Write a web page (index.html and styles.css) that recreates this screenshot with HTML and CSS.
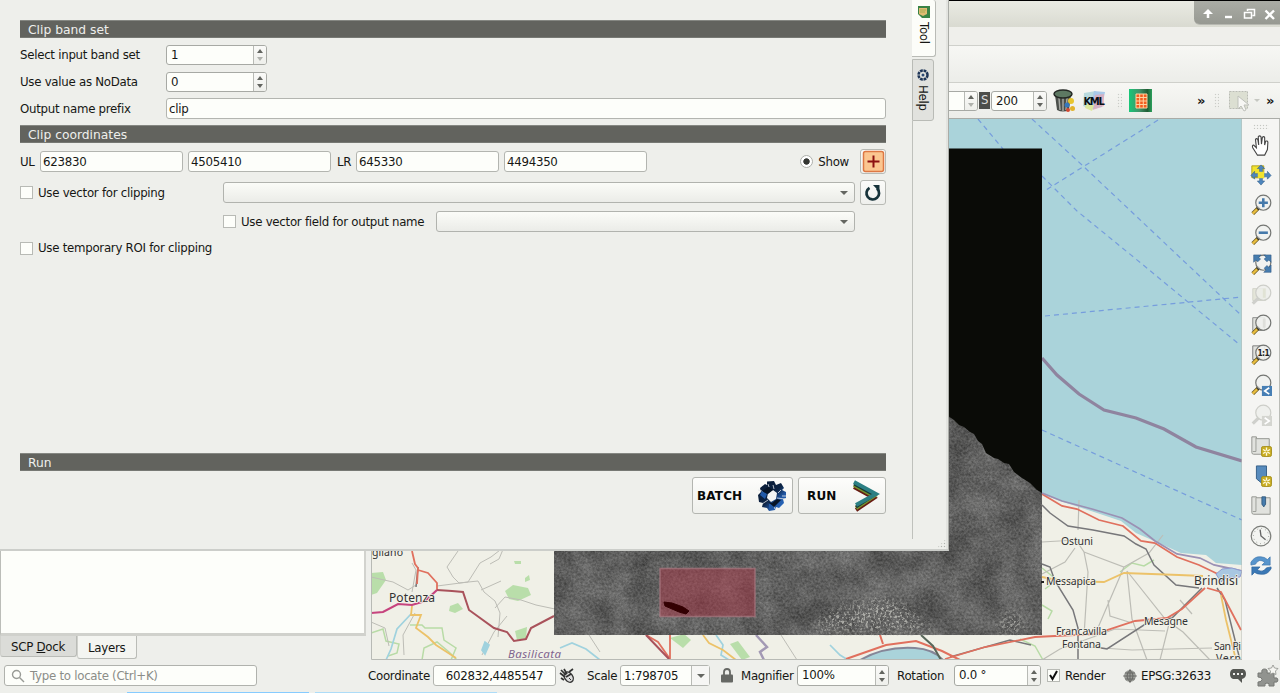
FILE: index.html
```html
<!DOCTYPE html>
<html lang="en">
<head>
<meta charset="utf-8">
<title>Clip band set</title>
<link rel="stylesheet" href="styles.css">
</head>
<body>
<svg class="defs" width="0" height="0">
  <symbol id="lens" viewBox="0 0 24 24">
    <path d="M3 21.500l6-6" stroke="#6b5a20" stroke-width="4.200"/>
    <path d="M3 21.500l5-5" stroke="#e8bd3f" stroke-width="2.600"/>
    <path d="M8 16.500l2.500-2.500" stroke="#222" stroke-width="3.200"/>
    <circle cx="14.500" cy="9.500" r="8.200" fill="#f1f2f0" fill-opacity=".9" stroke="#747673" stroke-width="1.300"/>
  </symbol>
  <symbol id="lens-off" viewBox="0 0 24 24">
    <path d="M3 21.500l7-7" stroke="#cfd0cc" stroke-width="3.500"/>
    <circle cx="14.500" cy="9.500" r="8.200" fill="#eeefeb" fill-opacity=".8" stroke="#cdcec9" stroke-width="1.300"/>
  </symbol>
  <symbol id="star" viewBox="0 0 12 12">
    <rect x=".5" y=".5" width="11" height="11" rx="2" fill="#c9ad22" stroke="#a48e1c"/>
    <path d="M6 1.500v9M2.200 3.800l7.600 4.400M2.200 8.200l7.600-4.400" stroke="#fffbe0" stroke-width="1.500"/>
    <circle cx="6" cy="6" r="1.200" fill="#c9ad22"/>
  </symbol>
</svg>

<div class="main-window">
  <header class="titlebar">
    <div class="window-buttons">
      <svg width="86" height="24" viewBox="0 0 86 24" fill="none" stroke="#fff">
        <path d="M14 17v-6" stroke-width="2.500"/><path d="M9 13l5-5 5 5z" fill="#fff" stroke="none"/>
        <path d="M31 16h7" stroke-width="2.400"/>
        <path d="M53.500 10v-1.500h7v6h-2M50.500 11.500h7v5.500h-7z" stroke-width="1.500"/>
        <path d="M71.500 9.500l8.500 8.500M80 9.500l-8.500 8.500" stroke-width="2.400"/>
      </svg>
    </div>
  </header>
  <div class="menubar"></div>
  <div class="toolrow"></div>
  <div class="toolrow tools">
    <div class="spin zoomspin"><span></span><i class="arrows dim"></i></div>
    <b class="s-badge">S</b>
    <div class="spin sizespin"><span>200</span><i class="arrows"></i></div>
    <svg class="trash" width="22" height="24" viewBox="0 0 22 24">
      <path d="M2 6l2 15q6 3 12 0l2-15z" fill="#4b4f4b"/><path d="M6 9l1 12M10 9v13M14 9l-1 12" stroke="#a5a8a2" stroke-width="1.500"/>
      <ellipse cx="10" cy="5" rx="9" ry="4" fill="#5d7862" stroke="#242824" stroke-width="1.500"/>
      <circle cx="18" cy="12" r="3" fill="#e7c52e"/><circle cx="14" cy="16" r="2.500" fill="#3677bc"/><circle cx="15" cy="21" r="2" fill="#d44832"/><circle cx="19.500" cy="19.500" r="2.500" fill="#e2b32b"/>
    </svg>
    <svg class="kml" width="24" height="22" viewBox="0 0 24 22">
      <path d="M2 3l12-2-6 18-7-3z" fill="#b9d9dd"/><path d="M12 1l11 1-3 15-12 3z" fill="#a9c9e9"/><path d="M13 5l9-1v12l-11 4z" fill="#e7a7b4" opacity=".7"/><path d="M4 14l8 1-2 6-7-3z" fill="#dce89c"/>
      <text x="12" y="15" text-anchor="middle" textLength="21" class="kml-text">KML</text>
    </svg>
    <i class="grip g1"></i>
    <svg class="grid-icon" width="23" height="23" viewBox="0 0 23 23">
      <defs><linearGradient id="gg"><stop offset="0" stop-color="#16c878"/><stop offset=".45" stop-color="#42936a"/><stop offset=".8" stop-color="#205c34"/><stop offset="1" stop-color="#2ba15c"/></linearGradient></defs>
      <rect width="23" height="23" fill="url(#gg)"/><rect x="7" y="5" width="11" height="14" fill="#f45d1f"/>
      <path d="M7 5h11v14H7zM10.700 5v14M14.300 5v14M7 8.500h11M7 12h11M7 15.500h11" stroke="#ffd3a0" fill="none"/>
    </svg>
    <b class="more m1">»</b>
    <i class="grip g2"></i>
    <svg class="select-icon" width="24" height="24" viewBox="0 0 24 24">
      <rect x="2.500" y="2.500" width="18" height="17" fill="#dcdfd2" stroke="#babcb5" stroke-dasharray="2 1"/>
      <path d="M11 7l11 9h-5l2 5-2 1-3-5-3 3z" fill="#f7f7f4" stroke="#bfc1bb"/>
    </svg>
    <i class="tri faint"></i>
    <b class="more m2">»</b>
  </div>

  <div class="workspace">
    <aside class="dock">
      <div class="dock-list"></div>
      <div class="dock-tabs"><span class="dock-tab">SCP <u>D</u>ock</span><span class="dock-tab current">Layers</span></div>
    </aside>

    <svg class="map" width="871" height="541" viewBox="371 119 871 541" fill="none">
      <defs>
        <filter id="grain" x="0" y="0" width="1" height="1" color-interpolation-filters="sRGB">
          <feTurbulence type="fractalNoise" baseFrequency=".42" numOctaves="3" seed="7" result="a"/>
          <feColorMatrix in="a" values=".4 0 0 0 .19  .4 0 0 0 .19  .4 0 0 0 .185  0 0 0 0 1" result="fine"/>
          <feTurbulence type="fractalNoise" baseFrequency=".035" numOctaves="4" seed="3"/>
          <feColorMatrix values=".6 0 0 0 .06  .6 0 0 0 .06  .6 0 0 0 .06  0 0 0 0 .38" result="coarse"/>
          <feMerge result="m"><feMergeNode in="fine"/><feMergeNode in="coarse"/></feMerge>
          <feComposite in="m" in2="SourceGraphic" operator="in"/>
        </filter>
        <filter id="specks" x="-.1" y="-.1" width="1.2" height="1.2" color-interpolation-filters="sRGB">
          <feGaussianBlur in="SourceGraphic" stdDeviation="6" result="soft"/>
          <feTurbulence type="fractalNoise" baseFrequency=".38" numOctaves="3" seed="12"/>
          <feColorMatrix values="0 0 0 0 .68  0 0 0 0 .68  0 0 0 0 .66  5 0 0 0 -2.500" result="s"/>
          <feComposite in="s" in2="soft" operator="in"/>
        </filter>
      </defs>
      <rect x="371" y="119" width="871" height="541" fill="#aad3da"/>
      <path fill="#f0f0e7" d="M371 540H930L1042 494l18 7 31 10 30 10 15 12 25 11 20 9 25 2 10 8 26 2V660H371z"/>
      <g fill="#b9deaa"><path d="M371 573l12-1 3 8-9 13-6 2z"/><path d="M505 591l8-6 15 3 3 7-13 6-9-2z"/><path d="M515 631l12-4-1 11-9 2z"/><path d="M450 606l8-3 5 6-8 4-6-2z"/><path d="M670 638l14-4 7 6-8 8z"/><path d="M730 644l8-3 12 16-8 3z"/><path d="M514 561h7v3h-6zM525 578l4-3 1 5-5 2z"/></g>
      <g stroke="#b8dba6" stroke-width="1.500"><path d="M410 625h12l3 3h17l2 12 12 8-5 12M371 633l12-4 3 12 13 3-2 9-9 3"/><path d="M422 660l2-12 13-6 12 10 8 8M1020 639l15 7 8 14M1042 568l15 12-12 9M1042 605l10 6-4 8M1120 572l12-9 12 3 10-6"/></g>
      <g stroke="#bdbdb6" stroke-width="1"><path d="M371 577l22 5 15 8 8-5M412 563l4 7-4 22M458 551l-11 16 6 10 6 6 19-2 6 11 11 9 5 12-2 24M437 586l31-4 12-19 11-6 13-10M504 547l-5 12-9 5M481 590l20-9M495 608l10-11 16 3 15 5 19 4M371 622l14 6 4 18M404 655l-1-20 12-22M482 655l12-23 13-16M589 635l11 17M781 635l16 25"/></g>
      <g stroke="#bdbdb6" stroke-width="1.200"><path d="M1042 542l34-2 8 12 4 20-4 64M1042 574l23-12 10-14M1084 552l40 15 25-14 14-18M1124 567l-30 70M1127 571l39 49 17 12 27 28M1127 571l5 48 15 41M1042 660l18-11 55-20 50 2M1072 646l60 4 80-2M1170 620l-10 40M1180 600l12 14M1108 600l2 16 22 7M1079 500l-1 30"/></g>
      <g stroke="#77777a" stroke-width="1.500"><path d="M418 567l-2 20"/><path d="M1042 564l8 3 5 14 18 29 5 18v32M1042 505l8 8 18 13 25 4 31 6 12 8 10 5 8 16 22 20 23 3M1217 588l8 12 15 60M1202 588l-30 30-25 5-40 26-12-2M950 657l60-17 21 5"/></g>
      <g stroke="#a0d2de" stroke-width="1.700"><path d="M411 614l-14 15-6 20-5 11M560 648l12-5 14 6 14 11M716 635l7 10-2 10 8 5M830 645l10 10 8 5"/><path d="M482 650l3-8 4 3-4 9z" fill="#a0d2de"/></g>
      <g stroke="#ecc269" stroke-width="1.800"><path d="M412 606l-1 9h10l-5 13 12 9 8 8 20 13M703 635l6 8 14 7 13 10M1042 577l20 4 42 1 20-9 55 2 24 1M1221 595l5 25 10 40"/></g>
      <g stroke="#e0705e" stroke-width="1.800"><path d="M412 551l3 13 3 4-1 16M418 570l10 3 9 10v7M646 635l12 7 12 17v-24M1042 494l20 12 15 3 22 11 24 6 18 15 14 2 22 14 22 8 23 11M1207 588l14 4 20 38M1205 588l-23 21-15 9-32 3-40 13-60 3-50 10-40 12"/></g>
      <path d="M437 590l15 1 11 1 6 18 25 18 13 4 7 9 12-2 5-11 23-12M646 635l23 24" stroke="#a9525b" stroke-width="2"/>
      <path d="M371 613l12-1 15-8 14 1 13-4 12-11" stroke="#c6447e" stroke-width="2.200"/>
      <path d="M756 635l11 12-7 5 4 8" stroke="#a399b4" stroke-width="2.500"/>
      <path d="M1042 358l15 17 22 19 25 16 32 8 28 11 32 18 46 14" stroke="#8f849f" stroke-width="3.200"/>
      <path d="M1042 493l20 8 30 8 30 9 18 11 15 12 22 13 23 4 14 7 14 3 14 3" stroke="#9b91b4" stroke-width="1.800"/>
      <g stroke="#769ddd" stroke-width="1.200" stroke-dasharray="5 4"><path d="M1032 119l50 46 160 151M1158 120l-112 70M1042 176l35 35 65 53 98 81M1045 316l197-19M1042 430l200 90M978 119l25 30"/></g>
      <path d="M860 660q25-14 55-12 18 1 28 12" fill="#aad3da" stroke="#858698" stroke-width="2"/>
      <path d="M846 659l40-14 30-4 26 10 18 9M880 635l3 9" stroke="#e0705e" stroke-width="2"/>
      <path d="M921 635l12 11 8 14" stroke="#58675a" stroke-width="2"/>
      <path d="M1216 574l6-5 10-1 10 3-2 6-14 1-5 4z" fill="#a8c7e1" stroke="#8f9ad0"/>
      <rect x="554" y="148.500" width="488" height="486.500" fill="#0a0b07"/>
      <path d="M554 416h394l6 4 5 5 5 2 6 5 4 2 4 7 4 3 4 9 8 5 4 1 6 4 5 1 5 8 8 6 8 5 7 7 5 3v142H554z" fill="#666" filter="url(#grain)"/>
      <path d="M810 632l16-18 30-12 25-6 22 8 26 22 4 6zM995 632l10-18 14-4 8 22z" fill="#fff" filter="url(#specks)"/>
      <rect x="660" y="568.500" width="95" height="48" fill="#a63343" fill-opacity=".5" stroke="#aa7880" stroke-opacity=".7" stroke-width="1.600"/>
      <path d="M664 602l8 1 11 4 6 4-3 3-7-2-14-6z" fill="#330002" stroke="#330002"/>
      <g class="places">
        <text x="372" y="556" textLength="31">gliano</text><text x="389" y="602" class="city" textLength="46">Potenza</text>
        <text x="508" y="658" class="region" textLength="53">Basilicata</text>
        <text x="1061" y="545" textLength="32">Ostuni</text><text x="1046" y="585" textLength="50">Messapica</text>
        <text x="1194" y="585" class="city" textLength="44">Brindisi</text><text x="1144" y="625" textLength="44">Mesagne</text>
        <text x="1056" y="635" textLength="51">Francavilla</text><text x="1062" y="648" textLength="39">Fontana</text>
        <text x="1214" y="650" textLength="27">San Pi</text><text x="1216" y="662" textLength="25">Vern</text>
      </g>
      <path d="M1041 582h3" stroke="#222" stroke-width="2"/>
      <path d="M371.500 119v540.500h870.500V119" stroke="#b8bab5"/>
    </svg>

    <nav class="side-tools">
      <i class="hgrip"></i>
      <svg viewBox="0 0 24 24"><path d="M8 23l-5-8q-1-3 1-3l3 3-1-9q1-2 2.500 0l1 6-.5-9q1.500-2 3 0l.5 8 1-7.500q2-1.500 2.500.5v8l1-4q2-1 2.500 1l-.5 8-3 6z" fill="#fff" stroke="#444" stroke-width="1.200"/></svg>
      <svg viewBox="0 0 24 24"><path d="M2 2h13v13H2z" fill="#f2e32e" stroke="#ad9d18"/><path d="M12 1l4 4h-2.500v5.500H19V8l4 4.500-4 4V14h-5.500v4.500H16L12 23l-4-4.500h2.500V14H5v2.500l-4-4L5 8v2.500h5.500V5H8z" fill="#4e86bd" stroke="#2d5c88" stroke-width=".6"/><path d="M8.500 8.500h7v7h-7z" fill="#f2e32e"/></svg>
      <svg viewBox="0 0 24 24"><use href="#lens"/><path d="M14.500 4.500v10M9.500 9.500h10" stroke="#4579aa" stroke-width="2.800"/></svg>
      <svg viewBox="0 0 24 24"><use href="#lens"/><path d="M9.500 9.500h10" stroke="#4579aa" stroke-width="2.800"/></svg>
      <svg viewBox="0 0 24 24"><use href="#lens"/><path d="M4 1h8L9.500 3.500l2 2-3 3-2-2L4 9zM23 1v8l-2.500-2.500-2 2-3-3 2-2L15 1zM23 20h-8l2.500-2.500-2-2 3-3 2 2L23 12z" fill="#467cae" stroke="#2d5680" stroke-width=".6"/></svg>
      <svg viewBox="0 0 24 24"><path d="M3 5h14v13H3z" fill="#e4e5d9" stroke="#d1d3c9"/><use href="#lens-off"/><path d="M14 5h3v10h-3z" fill="#e1e3d5"/></svg>
      <svg viewBox="0 0 24 24"><path d="M3 4h13v14H3z" fill="#e0e1dd" stroke="#858784"/><use href="#lens"/><path d="M14 5h3v10h-3z" fill="#dedfdb"/></svg>
      <svg viewBox="0 0 24 24"><path d="M3 2h13v15H3z" fill="#e0e1dd" stroke="#777"/><use href="#lens"/><text x="14.500" y="13" text-anchor="middle" class="ratio">1:1</text></svg>
      <svg viewBox="0 0 24 24"><use href="#lens"/><rect x="13" y="13" width="11" height="11" fill="#477fb5"/><path d="M21 15l-5 3.500 5 3.500" stroke="#fff" stroke-width="1.800" fill="none"/></svg>
      <svg viewBox="0 0 24 24"><use href="#lens-off"/><rect x="13" y="13" width="11" height="11" fill="#d4d5d0"/><path d="M16 15l5 3.500-5 3.500" stroke="#fff" stroke-width="1.800" fill="none"/></svg>
      <svg viewBox="0 0 24 24"><path d="M2 2h5v2h14v17H4q-2 0-2-2z" fill="#e1e2de" stroke="#8e908b"/><path d="M6.500 3v15H3" stroke="#989a95" fill="none"/><use href="#star" x="12" y="12" width="12" height="12"/></svg>
      <svg viewBox="0 0 24 24"><path d="M7 1h11v20l-5-1-6-5z" fill="#578bbd" stroke="#315c84"/><use href="#star" x="12" y="12" width="12" height="12"/></svg>
      <svg viewBox="0 0 24 24"><path d="M2 2h5v1h15v18H4q-2 0-2-2z" fill="#e1e2de" stroke="#8e908b"/><path d="M6.500 3v15H3" stroke="#989a95" fill="none"/><path d="M13 2h4v8l-2 3-2-3z" fill="#467cad" stroke="#345b7e"/></svg>
      <svg viewBox="0 0 24 24"><circle cx="12" cy="12" r="10.700" fill="#f3f4f1" stroke="#7a7c78" stroke-width="1.300"/><circle cx="12" cy="12" r="8.300" fill="none" stroke="#8c8e89" stroke-dasharray="1 3.340"/><path d="M11 5l1 7 5 4" fill="none" stroke="#666" stroke-width="1.500"/></svg>
      <svg viewBox="0 0 24 24"><path d="M1 8q4-7 11-6 4 0 7 3l3-3v9h-9l3-3q-6-5-10 2l-5 1z" fill="#5794cc" stroke="#3c74aa" stroke-width=".7"/><path d="M23 15q-4 7-11 6-4 0-7-2l-3 3v-9h9l-3 3q6 4 10-2l5-1z" fill="#3b78b5" stroke="#2c639b" stroke-width=".7"/></svg>
    </nav>
  </div>

  <footer class="status">
    <div class="locate"><svg width="14" height="14" viewBox="0 0 14 14" fill="none" stroke="#999b96" stroke-width="1.400"><circle cx="5.500" cy="5.500" r="4"/><path d="M8.500 8.500l4.500 4.500"/></svg><span>Type to locate (Ctrl+K)</span></div>
    <label class="l-coord">Coordinate</label><div class="field f-coord">602832,4485547</div>
    <svg class="mouse" width="16" height="16" viewBox="0 0 16 16" fill="none" stroke="#333"><ellipse cx="9.500" cy="9.500" rx="4" ry="5.500" transform="rotate(-35 9 9)" fill="#ddd" stroke-width="1.400"/><path d="M2 2l5 5M1 5l5 4M5 1l3 5M7 9l5-3M10 4l4-3M2 10l3 2" stroke-width="1.700"/><path d="M10 10l2 2"/></svg>
    <label class="l-scale">Scale</label><div class="field f-scale">1:798705<i><b class="tri"></b></i></div>
    <svg class="lock" width="12" height="15" viewBox="0 0 12 15"><path d="M3 7V4q0-3 3-3t3 3v3" fill="none" stroke="#666864" stroke-width="1.800"/><rect y="6.500" width="12" height="8" rx="1" fill="#666864"/></svg>
    <label class="l-mag">Magnifier</label><div class="spin f-mag"><span>100%</span><i class="arrows"></i></div>
    <label class="l-rot">Rotation</label><div class="spin f-rot"><span>0.0 °</span><i class="arrows"></i></div>
    <i class="box checked"><svg width="11" height="11" viewBox="0 0 11 11"><path d="M2 5l2.500 4L9 1" fill="none" stroke="#111" stroke-width="2"/></svg></i>
    <label class="l-render">Render</label>
    <svg class="globe" width="14" height="14" viewBox="0 0 14 14"><circle cx="7" cy="7" r="6" fill="#9b9d98"/><path d="M0 7h14M7 0v14M2 4h10M2 10h10M7 1q-6 6 0 12M7 1q6 6 0 12" fill="none" stroke="#5f615d" stroke-width=".8"/></svg>
    <label class="l-epsg">EPSG:32633</label>
    <svg class="bubble" width="16" height="15" viewBox="0 0 16 15"><path d="M3 1h10q3 1 3 5t-4 5v4l-4-4H3Q0 10 0 6t3-5z" fill="#555753"/><path d="M3 6h2M7 6h2M11 6h2" stroke="#f1f1ef" stroke-width="1.800"/></svg>
    <svg class="puzzle" width="22" height="22" viewBox="0 0 22 22"><path d="M1 8h4q-1-4 2.500-4T10 8h7v5q4-1 4 2t-4 2v4h-5q1-3-2-3t-2 3H1v-4q4 0 4-2.500T1 12z" fill="#91938f" stroke="#777975"/><path d="M16 0l1.500 3 3.500.5-2.500 2.500.5 3.500-3-1.500-3 1.500.5-3.500L11 3.500l3.500-.5z" fill="#f6f6f2" stroke="#8d8f8a" stroke-width=".8"/></svg>
  </footer>
</div>
<div class="taskbar"><i></i><i></i></div>

<section class="dialog">
  <main class="form">
    <h2>Clip band set</h2>
    <div class="row r-band"><label>Select input band set</label><div class="spin"><span>1</span><i class="arrows dim"></i></div></div>
    <div class="row r-nodata"><label>Use value as NoData</label><div class="spin"><span>0</span><i class="arrows"></i></div></div>
    <div class="row r-prefix"><label>Output name prefix</label><div class="field">clip</div></div>
    <h2>Clip coordinates</h2>
    <div class="row r-coords">
      <span class="ul">UL</span><div class="field">623830</div><div class="field">4505410</div>
      <span class="lr">LR</span><div class="field">645330</div><div class="field">4494350</div>
      <span class="show"><i class="radio"></i>Show</span>
      <div class="icon-btn"><svg width="23" height="23" viewBox="0 0 23 23"><rect x="1.500" y="1.500" width="20" height="20" rx="2" fill="#fbc690" stroke="#dd7844" stroke-width="1.500"/><path d="M11.500 5.500v12M5.500 11.500h12" stroke="#8d1111" stroke-width="2"/></svg></div>
    </div>
    <div class="row r-vector"><i class="box"></i><label>Use vector for clipping</label><div class="combo"><b class="tri"></b></div>
      <div class="icon-btn"><svg width="18" height="18" viewBox="0 0 18 18"><path d="M5.500 3.800A6.300 6.300 0 1 0 13 4.500" fill="none" stroke="#17333a" stroke-width="2.700"/><path d="M9 1h6.500v7z" fill="#17333a"/></svg></div></div>
    <div class="row r-field"><i class="box"></i><label>Use vector field for output name</label><div class="combo"><b class="tri"></b></div></div>
    <div class="row r-roi"><i class="box"></i><label>Use temporary ROI for clipping</label></div>
    <div class="spacer"></div>
    <h2>Run</h2>
    <div class="actions">
      <button class="batch">BATCH<svg width="32" height="32" viewBox="0 0 32 32" fill="none">
        <defs><linearGradient id="ring" x1="0" y1="0" x2="1" y2="1"><stop offset=".15" stop-color="#0a1d38"/><stop offset=".5" stop-color="#0d2444"/><stop offset=".68" stop-color="#2055a0"/><stop offset="1" stop-color="#2f76d2"/></linearGradient></defs>
        <path d="M11 1.500l7-.5 2 4 5-2 3 5-2 2 4 2v6l-3 1 1 4-5 5-3-1-1 3-6 1-2-3-5-1 1-4-4-1-1-7 3-3-1-4 5-4 2 1z" fill="url(#ring)"/>
        <path d="M12 13l5-3 4 3-1 6-5 3-4-4z" fill="#f4f5f3"/>
        <path d="M2 10l4 1 4 4M17 5l1 4M25 10l-3 3M21 18l8 1M16 23l3 6M6 24l6-4M12 4l1 3M26 16h4" stroke="#dfe3e8" stroke-width=".8"/>
        <path d="M4 15l2-4 5 3-2 5zM13 24l4-1 1 5-5 1z" fill="#215aa8"/>
        <path d="M6 11l6-4 5 3-5 4zM12 22l4 1 5-4 4 1-7 7z" fill="#061426"/>
      </svg></button>
      <button class="run">RUN<svg width="28" height="34" viewBox="0 0 28 34" fill="none" stroke-width="4"><path d="M2 8l20 11L4 31" stroke="#671b12"/><path d="M2 6l20 11L4 29" stroke="#76932d"/><path d="M2 5l20 11L4 28" stroke="#183835" stroke-width="3"/><path d="M2 3l22 12L4 26" stroke="#2b7f83" stroke-width="4"/></svg></button>
    </div>
  </main>
  <aside class="tabs">
    <div class="vtab active"><svg width="12" height="12" viewBox="0 0 12 12"><path d="M0 0h12v12H4L0 8z" fill="#398345"/><path d="M1 2h8v6l-4 2-4-2z" fill="#e1bc73"/><path d="M2 4h6M2 6h5" stroke="#a5ac55"/></svg><span>Tool</span></div>
    <div class="vtab"><svg width="12" height="12" viewBox="0 0 12 12"><circle cx="6" cy="6" r="4.500" fill="none" stroke="#1e3557" stroke-width="2.500" stroke-dasharray="2.800 .734"/><circle cx="6" cy="6" r="1.500" fill="#2c4a73"/></svg><span>Help</span></div>
    <div class="tab-line"></div>
  </aside>
  <i class="resize"></i>
</section>
</body>
</html>
```
FILE: styles.css
```css
* { box-sizing: border-box; }
body { margin: 0; width: 1280px; height: 693px; overflow: hidden; position: relative; background: #eeefeb; color: #161714; font: 11.8px/16px "DejaVu Sans", sans-serif; letter-spacing: -.28px; }
svg { display: block; flex: none; }
label, span { white-space: nowrap; }
.defs { position: absolute; }
.main-window { height: 693px; display: flex; flex-direction: column; border-top: 1px solid #000; }
.titlebar { height: 26px; flex: none; display: flex; justify-content: flex-end; background: linear-gradient(#eaebe3, #d9dad1); }
.window-buttons { width: 86px; height: 24px; background: linear-gradient(#aaaca5, #979992); border-radius: 0 0 0 6px; border-bottom: 1px solid #b7b8b1; }
.menubar { height: 18px; flex: none; background: #efefeb; }
.toolrow { height: 37px; flex: none; border-top: 1px solid #cfd0cb; background: linear-gradient(#f7f7f4, #ecede9); }
.tools { display: flex; align-items: center; padding-left: 900px; height: 37px; border-bottom: 1px solid #aaaca7; }

.spin { display: flex; height: 21px; border: 1px solid #a7a9a4; border-radius: 3px; background: #fdfefa; overflow: hidden; }
.spin span { flex: 1; padding-left: 4px; line-height: 19px; }
.arrows { width: 13px; border-left: 1px solid #b8bab5; background: linear-gradient(#fafaf8, #eeefeb); display: flex; flex-direction: column; align-items: center; justify-content: center; gap: 4px; }
.arrows::before, .arrows::after { content: ""; border: 3.500px solid transparent; }
.arrows::before { border-top: 0; border-bottom: 4px solid #62645f; }
.arrows::after { border-bottom: 0; border-top: 4px solid #62645f; }
.arrows.dim::after { border-top-color: #afb1ac; }
.zoomspin { width: 78px; height: 20px; }
.s-badge { width: 11px; height: 17px; margin: 0 1px; background: #4d4e4b; color: #ddd; font-weight: 400; line-height: 17px; text-align: center; }
.sizespin { width: 56px; height: 20px; }
.trash { margin-left: 6px; }
.kml { margin-left: 7px; }
.kml-text { font: bold 10px "DejaVu Sans", sans-serif; fill: #0b1116; }
.grip { width: 5px; height: 16px; background: radial-gradient(circle, #b1b3ad 38%, transparent 48%) 0 0 / 3px 3px; opacity: .6; }
.g1 { margin-left: 11px; }
.grid-icon { margin-left: 7px; }
.more { font: bold 13px/16px "DejaVu Sans", sans-serif; }
.m1 { margin-left: 45px; width: 9px; }
.g2 { margin-left: 8px; }
.select-icon { margin-left: 8px; }
.tri { border: 4px solid transparent; border-top-color: #646661; border-bottom: 0; }
.tri.faint { margin-left: 3px; border-width: 3px; border-bottom: 0; border-top-color: #c6c8c2; }
.m2 { margin-left: 6px; }

.workspace { height: 541px; flex: none; display: flex; }
.dock { width: 371px; display: flex; flex-direction: column; }
.dock-list { width: 366px; height: 518px; border: 1px solid #bbbdb8; border-right: 2px solid #d2d3ce; border-bottom: 3px solid #d0d1cc; background: #fdfefa; }
.dock-tabs { display: flex; align-items: flex-start; height: 24px; }
.dock-tab { width: 77px; height: 21px; line-height: 23px; background: #dbdcd8; border: 1px solid #babcb7; border-top: 0; border-left-color: #d0d1cc; border-radius: 0 0 3px 3px; padding-left: 10px; }
.dock-tab.current { width: 60px; height: 23px; line-height: 25px; background: #f4f5f1; }
.places text { font: 10.500px "Noto Sans", sans-serif; fill: #333; stroke: #f2f2e9; stroke-width: 1.500px; paint-order: stroke; letter-spacing: 0; }
.places .city { font-size: 12px; }
.places .region { font-size: 11.500px; font-style: italic; fill: #80648e; }
.side-tools { width: 38px; display: flex; flex-direction: column; align-items: center; gap: 8.060px; padding-top: 5px; border-right: 1px solid #babcb7; background: #f5f5f3; }
.side-tools svg { width: 22px; height: 22px; }
.hgrip { width: 16px; height: 5px; flex: none; margin-bottom: -3px; background: radial-gradient(circle, #b1b3ad 38%, transparent 48%) 0 0 / 3px 3px; opacity: .7; }
.ratio { font: bold 9px "DejaVu Sans Condensed", "DejaVu Sans", sans-serif; letter-spacing: -.7px; fill: #222; }

.status { height: 32px; flex: none; display: flex; align-items: center; padding: 0 0 1px 4px; }
.field { height: 21px; border: 1px solid #b3b5b0; border-radius: 3px; background: #fdfefa; padding-left: 2px; line-height: 20px; }
.locate { width: 253px; height: 21px; border: 1px solid #b0b2ad; border-radius: 3px; background: #fdfefa; display: flex; align-items: center; padding-left: 6px; gap: 5px; color: #8b8d88; }
.l-coord { margin-left: 111px; width: 65px; }
.f-coord { width: 123px; text-align: center; padding: 0; }
.mouse { margin-left: 3px; }
.l-scale { margin-left: 12px; width: 33px; }
.f-scale { width: 90px; display: flex; justify-content: space-between; padding-left: 3px; }
.f-scale i { width: 18px; border-left: 1px solid #b8bab5; display: flex; align-items: center; justify-content: center; background: #f6f6f4; }
.lock { margin-left: 11px; }
.l-mag { margin-left: 8px; width: 56px; }
.f-mag { width: 92px; }
.l-rot { margin-left: 8px; width: 57px; }
.f-rot { width: 87px; }
.box { width: 13px; height: 13px; flex: none; border: 1px solid #b8bab5; background: #fdfefa; }
.checked { margin-left: 6px; }
.l-render { margin-left: 5px; width: 58px; }
.l-epsg { margin-left: 4px; width: 89px; }
.puzzle { margin-left: 11px; }
.taskbar { position: absolute; left: 0; bottom: 0; height: 1px; display: flex; gap: 6px; padding-left: 127px; }
.taskbar i { width: 182px; background: #86cbff; }
.taskbar i + i { background: #addcf8; }

.dialog { position: absolute; left: 0; top: 0; width: 949px; height: 551px; background: #eeefeb; border-right: 1px solid #aaaca7; border-bottom: 2px solid #ccceca; box-shadow: inset -2px 0 #e3e4e0; display: flex; }
.form { width: 886px; padding: 20px 0 0 20px; display: flex; flex-direction: column; }
h2 { height: 18px; flex: none; margin: 0; padding-left: 8px; background: #62635e; border-top: 1px solid #858782; border-bottom: 1px solid #777974; color: #eeefec; font: 12.300px/18px "DejaVu Sans", sans-serif; letter-spacing: 0; }
.row { display: flex; align-items: center; flex: none; }
.r-band, .r-nodata, .r-prefix { display: grid; grid-template-columns: 146px 1fr; }
.r-band { height: 34px; }
.r-nodata { height: 20px; }
.r-band .spin, .r-nodata .spin { width: 101px; height: 20px; }
.r-prefix { height: 33px; }
.r-coords { height: 37px; }
.r-coords .field { width: 143px; margin-right: 5px; }
.ul { width: 20px; }
.lr { width: 20px; padding-left: 1px; }
.show { display: flex; align-items: center; gap: 5px; margin-left: auto; margin-right: 11px; }
.radio { width: 13px; height: 13px; border: 1px solid #aeb0ab; border-radius: 50%; background: radial-gradient(circle, #343632 0 2.800px, #fff 3.600px); }
.icon-btn { width: 26px; height: 25px; border: 1px solid #b8bab5; border-radius: 3px; background: linear-gradient(#fbfbf9, #eff0ed); display: flex; align-items: center; justify-content: center; }
.box + label { margin-left: 5px; }
.r-vector { height: 25px; }
.r-vector label { width: 185px; }
.combo { height: 21px; flex: 1; border: 1px solid #b1b3ae; border-radius: 3px; background: linear-gradient(#fbfcf8, #ebece8); display: flex; align-items: center; justify-content: flex-end; padding-right: 6px; }
.r-vector .icon-btn { margin-left: 5px; }
.r-field { height: 33px; padding-left: 203px; padding-right: 31px; }
.r-field label { width: 195px; }
.r-roi { height: 20px; }
.spacer { height: 195px; }
.actions { display: flex; justify-content: flex-end; gap: 5px; margin-top: 6px; }
button { height: 37px; border: 1px solid #b4b6b1; border-radius: 3px; background: linear-gradient(#fdfdfb, #eff0ec); display: flex; align-items: center; justify-content: space-between; padding: 0 4px; color: #080908; font: bold 12px/16px "DejaVu Sans", sans-serif; letter-spacing: .15px; }
.batch { width: 101px; padding-left: 4px; padding-right: 4px; }
.run { width: 88px; padding-left: 8px; padding-right: 5px; }
.tabs { width: 25px; margin-left: 26px; display: flex; flex-direction: column; }
.vtab { width: 22px; height: 62px; margin-top: 2px; border: 1px solid #b9bbb6; border-radius: 0 3px 3px 0; background: #e1e2de; padding-top: 9px; display: flex; flex-direction: column; align-items: center; gap: 4px; }
.vtab.active { width: 24px; height: 57px; margin: 0; border-width: 0 1px 1px 0; background: #fcfdf9; padding-top: 6px; }
.vtab span { writing-mode: vertical-rl; line-height: 16px; }
.tab-line { height: 418px; border-left: 1px solid #bfc1bc; }
.resize { position: absolute; right: 2px; bottom: 1px; width: 9px; height: 9px; background: radial-gradient(circle, #b1b3ad 38%, transparent 48%) 0 0 / 3px 3px; clip-path: polygon(100% 0, 100% 100%, 0 100%); }
```
